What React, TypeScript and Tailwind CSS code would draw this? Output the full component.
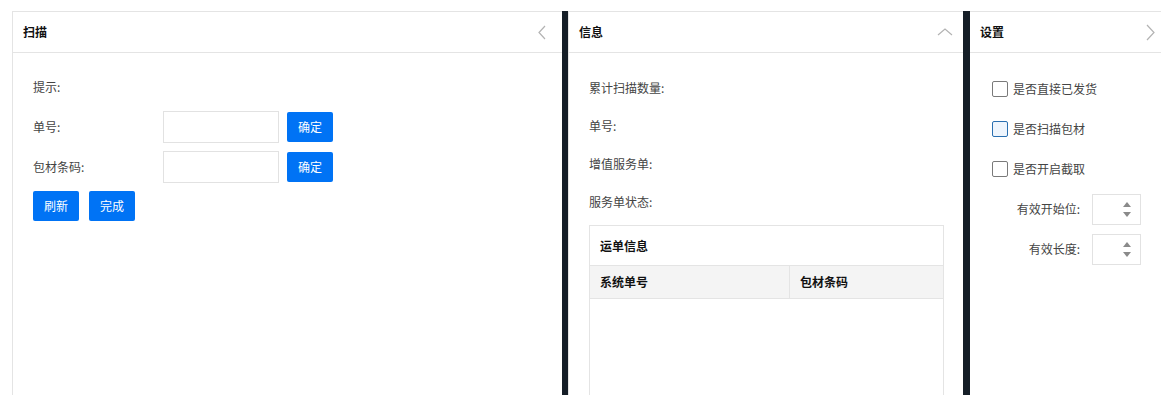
import React from "react";

const FONT = { fontFamily: '"Noto Sans CJK SC", "Noto Sans", sans-serif' };

function Chevron({ dir }: { dir: "left" | "up" | "right" }) {
  if (dir === "left") {
    return (
      <svg width="8" height="15" viewBox="0 0 8 15" className="mr-[16px]">
        <polyline points="7,1 1,7.5 7,14" fill="none" stroke="#b3b3b3" strokeWidth="1.2" />
      </svg>
    );
  }
  if (dir === "up") {
    return (
      <svg width="16" height="8" viewBox="0 0 16 8" className="mr-[10px]">
        <polyline points="1,7 8,1 15,7" fill="none" stroke="#b3b3b3" strokeWidth="1.2" />
      </svg>
    );
  }
  return (
    <svg width="9" height="17" viewBox="0 0 9 17" className="mr-[6px]">
      <polyline points="1,1 8,8.5 1,16" fill="none" stroke="#b3b3b3" strokeWidth="1.2" />
    </svg>
  );
}

function PanelHeader({ title, dir }: { title: string; dir: "left" | "up" | "right" }) {
  return (
    <div className="flex h-[41px] items-center justify-between border-b border-[#e4e4e4] pl-[10px]">
      <span className="text-[12px] font-bold text-[#111]">{title}</span>
      <Chevron dir={dir} />
    </div>
  );
}

function BlueButton({ text }: { text: string }) {
  return (
    <button className="h-[30px] w-[46px] rounded-[2px] bg-[#0073f5] text-[12px] text-white">
      {text}
    </button>
  );
}

function NumberBox() {
  return (
    <div className="flex h-[31px] w-[49px] items-center justify-end border border-[#e2e2e2] pr-[9px]">
      <div className="flex flex-col items-center gap-[5px]">
        <svg width="8" height="5" viewBox="0 0 8 5">
          <polygon points="0,5 4,0 8,5" fill="#8a8a8a" />
        </svg>
        <svg width="8" height="5" viewBox="0 0 8 5">
          <polygon points="0,0 8,0 4,5" fill="#8a8a8a" />
        </svg>
      </div>
    </div>
  );
}

export default function App() {
  const checks = [
    { label: "是否直接已发货", active: false },
    { label: "是否扫描包材", active: true },
    { label: "是否开启截取", active: false },
  ];

  return (
    <div className="h-[395px] w-[1161px] overflow-hidden bg-white pl-[12px] pt-[11px]" style={FONT}>
      <div className="flex h-[420px]">
        {/* 扫描 */}
        <section className="w-[550px] border-l border-t border-[#e4e4e4]">
          <PanelHeader title="扫描" dir="left" />
          <div className="px-[20px] pt-[18px] text-[12px] text-[#444]">
            <div className="mb-[8px] flex h-[32px] items-center">提示:</div>
            <div className="mb-[8px] flex h-[32px] items-center">
              <span className="w-[130px]">单号:</span>
              <div className="h-[32px] w-[116px] border border-[#e2e2e2]" />
              <div className="ml-[8px]">
                <BlueButton text="确定" />
              </div>
            </div>
            <div className="mb-[8px] flex h-[32px] items-center">
              <span className="w-[130px]">包材条码:</span>
              <div className="h-[32px] w-[116px] border border-[#e2e2e2]" />
              <div className="ml-[8px]">
                <BlueButton text="确定" />
              </div>
            </div>
            <div className="flex gap-[10px]">
              <BlueButton text="刷新" />
              <BlueButton text="完成" />
            </div>
          </div>
        </section>

        <div className="w-[6px] bg-[#151e27]" />

        {/* 信息 */}
        <section className="w-[395px] border-l border-t border-[#e4e4e4]">
          <PanelHeader title="信息" dir="up" />
          <div className="px-[20px] pt-[16px] text-[12px] text-[#444]">
            {["累计扫描数量:", "单号:", "增值服务单:", "服务单状态:"].map((t) => (
              <div key={t} className="flex h-[38px] items-center">
                {t}
              </div>
            ))}
            <div className="mt-[4px] h-[200px] w-[355px] border border-[#e4e4e4]">
              <div className="flex h-[40px] items-center border-b border-[#e4e4e4] pl-[10px] font-bold text-[#111]">
                运单信息
              </div>
              <div className="flex h-[33px] border-b border-[#e4e4e4] bg-[#f4f4f4] font-bold text-[#111]">
                <div className="flex w-[200px] items-center border-r border-[#e4e4e4] pl-[10px]">
                  系统单号
                </div>
                <div className="flex items-center pl-[10px]">包材条码</div>
              </div>
            </div>
          </div>
        </section>

        <div className="w-[7px] bg-[#151e27]" />

        {/* 设置 */}
        <section className="w-[191px] border-t border-[#e4e4e4]">
          <PanelHeader title="设置" dir="right" />
          <div className="pl-[22px] pt-[16px] text-[12px] text-[#444]">
            {checks.map((c) => (
              <div key={c.label} className="flex h-[40px] items-center">
                <span
                  className={
                    c.active
                      ? "h-[16px] w-[16px] rounded-[2px] border border-[#2a6fb0] bg-[#eef5fd]"
                      : "h-[16px] w-[16px] rounded-[2px] border border-[#7a7a7a] bg-white"
                  }
                />
                <span className="ml-[5px]">{c.label}</span>
              </div>
            ))}
            {["有效开始位:", "有效长度:"].map((t) => (
              <div key={t} className="flex h-[40px] items-center">
                <span className="w-[88px] text-right">{t}</span>
                <div className="ml-[12px]">
                  <NumberBox />
                </div>
              </div>
            ))}
          </div>
        </section>
      </div>
    </div>
  );
}
